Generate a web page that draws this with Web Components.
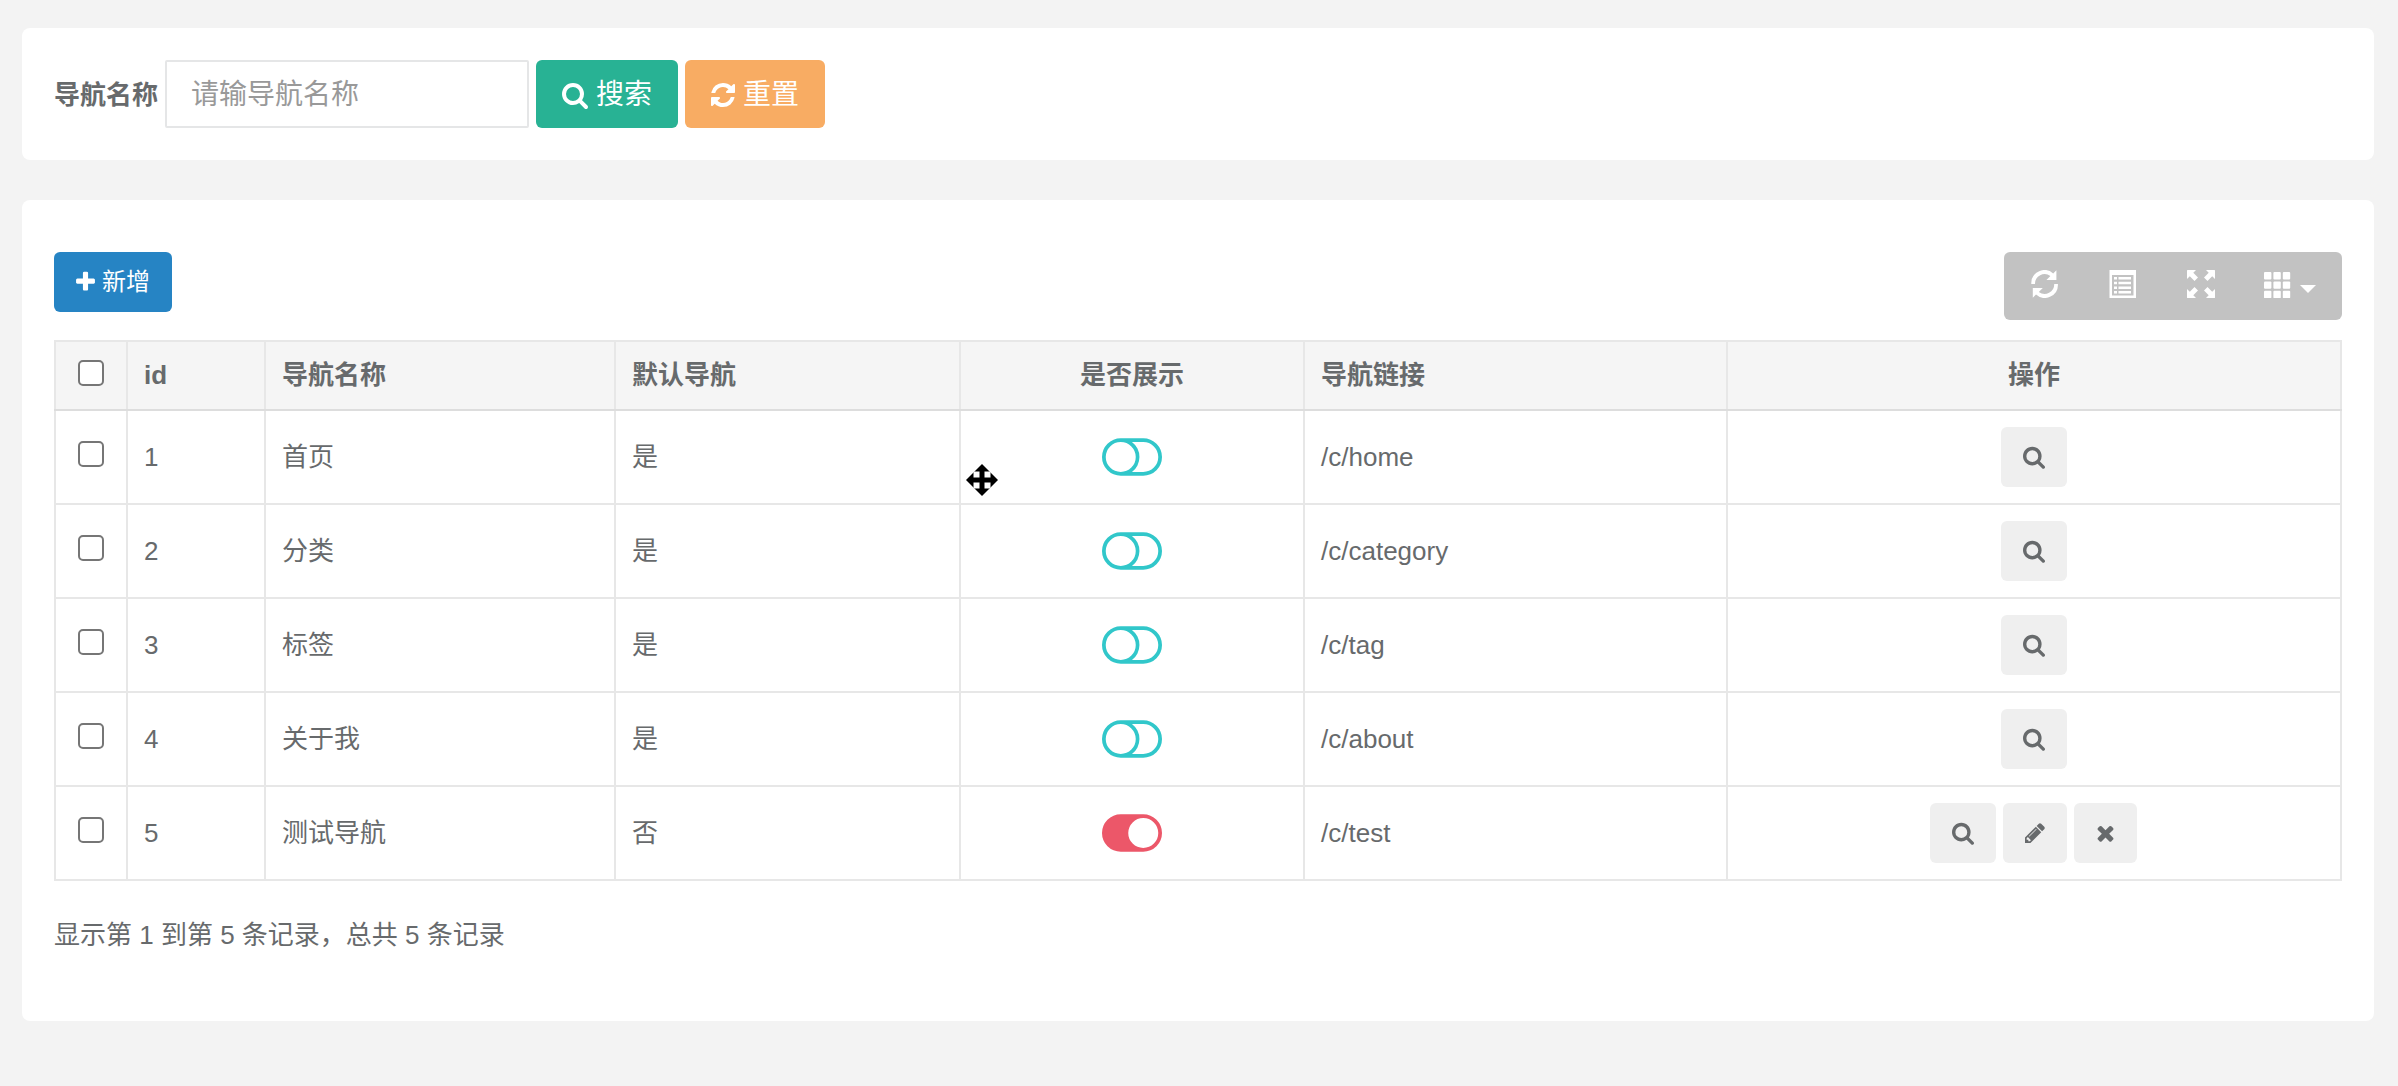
<!DOCTYPE html>
<html lang="zh-CN">
<head>
<meta charset="utf-8">
<title>导航管理</title>
<style>
  :root {
    --text: #676a6c;
    --line: #e7e7e7;
    --primary: #2684c4;
    --success: #28b294;
    --warning: #f8ac63;
    --info: #31c7ca;
    --danger: #ec5769;
  }
  html { background: #f3f3f3; }
  body {
    position: relative;
    margin: 0;
    color: var(--text);
    font: 26px/36px "Liberation Sans", "Noto Sans CJK SC", sans-serif;
  }
</style>
</head>
<body>
<nav-page></nav-page>

<script>
const ICONS = {
  search: [22, 26, '64 0 1664 1792', '<path d="M1216 832q0-185-131.5-316.5t-316.5-131.5-316.5 131.5-131.5 316.5 131.5 316.5 316.5 131.5 316.5-131.5 131.5-316.5zm512 832q0 52-38 90t-90 38q-54 0-90-38l-343-342q-179 124-399 124-143 0-273.5-55.5t-225-150-150-225-55.5-273.5 55.5-273.5 150-225 225-150 273.5-55.5 273.5 55.5 225 150 150 225 55.5 273.5q0 220-124 399l343 343q37 37 37 90z"/>'],
  refresh: [21, 24, '128 0 1536 1792', '<path d="M1639 1056q0 5-1 7-64 268-268 434.5t-478 166.5q-146 0-282.5-55t-243.5-157l-129 129q-19 19-45 19t-45-19-19-45v-448q0-26 19-45t45-19h448q26 0 45 19t19 45-19 45l-137 137q71 66 161 102t187 36q134 0 250-65t186-179q11-17 53-117 8-23 30-23h192q13 0 22.5 9.5t9.5 22.5zm25-800v448q0 26-19 45t-45 19h-448q-26 0-45-19t-19-45 19-45l138-138q-148-137-349-137-134 0-250 65t-186 179q-11 17-53 117-8 23-30 23h-199q-13 0-22.5-9.5t-9.5-22.5v-7q65-268 270-434.5t480-166.5q146 0 284 55.5t245 156.5l130-129q19-19 45-19t45 19 19 45z"/>'],
  plus: [19, 22, '192 0 1408 1792', '<path d="M1600 736v192q0 40-28 68t-68 28h-416v416q0 40-28 68t-68 28h-192q-40 0-68-28t-28-68v-416h-416q-40 0-68-28t-28-68v-192q0-40 28-68t68-28h416v-416q0-40 28-68t68-28h192q40 0 68 28t28 68v416h416q40 0 68 28t28 68z"/>'],
  pencil: [20, 24, '128 0 1536 1792', '<path d="M491 1536l91-91-235-235-91 91v107h128v128h107zm523-928q0-22-22-22-10 0-17 7l-542 542q-7 7-7 17 0 22 22 22 10 0 17-7l542-542q7-7 7-17zm-54-192l416 416-832 832h-416v-416zm683 96q0 53-37 90l-166 166-416-416 166-165q36-38 90-38 53 0 91 38l235 234q37 39 37 91z"/>'],
  remove: [19, 22, '192 0 1408 1792', '<path d="M1490 1322q0 40-28 68l-136 136q-28 28-68 28t-68-28l-294-294-294 294q-28 28-68 28t-68-28l-136-136q-28-28-28-68t28-68l294-294-294-294q-28-28-28-68t28-68l136-136q28-28 68-28t68 28l294 294 294-294q28-28 68-28t68 28l136 136q28 28 28 68t-28 68l-294 294 294 294q28 28 28 68z"/>']
};
const RELOAD = 'M.3 14A13.2 13.2 0 0 1 22.2 3.4L25.4.2V10H15.4L19.4 6A9.6 9.6 0 0 0 4 14Z';
const ARROW = 'M0 .6Q0 0 .6 0H9L6.3 2.8 11 7.5 7.5 11 2.8 6.3 0 9Z';
const GLYPHS = {
  reload: `<path d="${RELOAD}"/><path d="${RELOAD}" transform="rotate(180 13.6 14)"/>`,
  list: '<path fill-rule="evenodd" d="M.5 0H27V28H.5ZM3 5V25.600H24.500V5Z"/><path d="M5 7h3v2.500H5zM9.500 7h12.500v2.500H9.500zM5 11.700h3v2.500H5zM9.500 11.700h12.500v2.500H9.500zM5 16.400h3v2.500H5zM9.500 16.400h12.500v2.500H9.500zM5 21h3v2.500H5zM9.500 21h12.500v2.500H9.500z"/>',
  full: ['1 0 0 1 0 0', '-1 0 0 1 28 0', '1 0 0 -1 0 28', '-1 0 0 -1 28 28'].map(m => `<path d="${ARROW}" transform="matrix(${m})"/>`).join(''),
  grid: [0, 9.4, 18.8].map(y => [0, 9.4, 18.8].map(x => `<rect x="${x}" y="${y + 2}" width="7.400" height="7.400" rx="1"/>`).join('')).join('')
};

class BaseElement extends HTMLElement {
  render(css, html) {
    if (!this.shadowRoot) this.attachShadow({ mode: 'open' });
    this.shadowRoot.innerHTML = `<style>*{box-sizing:border-box}${css}</style>${html}`;
  }
}

class FaIcon extends BaseElement {
  connectedCallback() {
    const [small, large, box, shape] = ICONS[this.getAttribute('name')];
    const big = this.getAttribute('size') === 'lg';
    this.render(':host{display:block}svg{display:block;fill:currentColor}',
      `<svg width="${big ? large : small}" height="${big ? 28 : 24}" viewBox="${box}" aria-hidden="true">${shape}</svg>`);
  }
}

class UiButton extends BaseElement {
  connectedCallback() {
    const label = this.getAttribute('label');
    this.render(`
      :host { display: block; --bg: #efefef; --fg: var(--text); }
      :host([kind=primary]) { --bg: var(--primary); --fg: #fff; }
      :host([kind=success]) { --bg: var(--success); --fg: #fff; }
      :host([kind=warning]) { --bg: var(--warning); --fg: #fff; }
      button {
        display: flex; align-items: center; gap: 7px;
        height: 60px; margin: 0; padding: 0 22px; border: 0; border-radius: 6px;
        background: var(--bg); color: var(--fg); font: inherit; font-size: 24px; cursor: pointer;
      }
      :host([size=lg]) button { height: 68px; padding: 2px 26px 0; gap: 8px; font-size: 28px; }
    `, `<button type="button"${label ? ` aria-label="${label}"` : ''}><slot></slot></button>`);
  }
}

class UiPanel extends BaseElement {
  connectedCallback() {
    this.render(':host{display:block;background:#fff;border-radius:8px;padding:32px}', '<slot></slot>');
  }
}

class UiSwitch extends BaseElement {
  connectedCallback() {
    const on = this.hasAttribute('on');
    const shape = on
      ? 'M640 0H1408A640 640 0 0 1 1408 1280H640A640 640 0 0 1 640 0ZM1408 128A512 512 0 0 0 1408 1152A512 512 0 0 0 1408 128Z'
      : 'M640 0H1408A640 640 0 0 1 1408 1280H640A640 640 0 0 1 640 0ZM640 128A512 512 0 0 0 640 1152A512 512 0 0 0 640 128ZM1022 128A640 640 0 0 1 1022 1152H1408A512 512 0 0 0 1408 128Z';
    this.render(`
      :host { display: block; width: 60px; margin: 0 auto; color: var(--info); }
      :host([on]) { color: var(--danger); }
      label { display: grid; cursor: pointer; }
      label > * { grid-area: 1 / 1; }
      input { width: 60px; height: 38px; margin: 0; opacity: 0; }
      svg { display: block; fill: currentColor; }
    `, `<label><input type="checkbox" role="switch" aria-label="是否展示"${on ? ' checked' : ''}>
        <svg width="60" height="38" viewBox="0 0 2048 1280" aria-hidden="true"><path fill-rule="evenodd" d="${shape}"/></svg></label>`);
  }
}

class UiCheck extends BaseElement {
  connectedCallback() {
    this.render(`
      :host { display: block; }
      input {
        display: block; appearance: none; width: 26px; height: 26px; margin: 0 auto 6px;
        border: 2px solid #767676; border-radius: 5px; background: #fff;
      }
      input:checked { background: var(--primary); border-color: var(--primary); }
    `, `<input type="checkbox" aria-label="${this.getAttribute('label')}">`);
  }
}

class NavSearch extends BaseElement {
  connectedCallback() {
    this.render(`
      :host { display: block; }
      form { display: flex; align-items: center; gap: 7px; }
      label { padding-top: 2px; font-weight: 700; }
      input {
        width: 364px; height: 68px; padding: 2px 24px 0; border: 2px solid #e5e6e7; border-radius: 2px;
        background: #fff; color: inherit; font: inherit; font-size: 28px; outline: 0;
      }
      input::placeholder { color: #999; opacity: 1; }
    `, `<form>
        <label for="name">导航名称</label>
        <input id="name" type="text" placeholder="请输导航名称">
        <ui-button kind="success" size="lg"><fa-icon name="search" size="lg"></fa-icon>搜索</ui-button>
        <ui-button kind="warning" size="lg"><fa-icon name="refresh" size="lg"></fa-icon>重置</ui-button>
      </form>`);
  }
}

class NavToolbar extends BaseElement {
  connectedCallback() {
    const glyph = n => `<svg width="28" height="28" viewBox="0 0 28 28" aria-hidden="true">${GLYPHS[n]}</svg>`;
    this.render(`
      :host { display: flex; justify-content: space-between; align-items: flex-start; padding: 20px 0; }
      .tools { display: flex; border-radius: 6px; overflow: hidden; background: #c2c2c2; }
      .tools button {
        display: flex; align-items: flex-start; height: 68px; margin: 0; padding: 18px 23px 0 27px;
        border: 0; background: none; cursor: pointer;
      }
      .tools button.menu { padding: 18px 26px 0; gap: 8px; }
      svg { display: block; fill: #fff; }
    `, `<ui-button kind="primary"><fa-icon name="plus"></fa-icon>新增</ui-button>
      <div class="tools">
        <button type="button" aria-label="刷新">${glyph('reload')}</button>
        <button type="button" aria-label="切换">${glyph('list')}</button>
        <button type="button" aria-label="全屏">${glyph('full')}</button>
        <button type="button" class="menu" aria-label="列">${glyph('grid')}<svg width="16" height="28" viewBox="0 0 16 28" aria-hidden="true"><path d="M0 15H16L8 23Z"/></svg></button>
      </div>`);
  }
}

class NavTable extends BaseElement {
  connectedCallback() {
    const rows = [
      [1, '首页', '是', false, '/c/home'],
      [2, '分类', '是', false, '/c/category'],
      [3, '标签', '是', false, '/c/tag'],
      [4, '关于我', '是', false, '/c/about'],
      [5, '测试导航', '否', true, '/c/test']
    ];
    const act = (icon, label) => `<ui-button label="${label}"><fa-icon name="${icon}"></fa-icon></ui-button>`;
    const body = rows.map(([id, name, def, on, link]) => `<tr>
      <td><ui-check label="选择 ${id}"></ui-check></td>
      <td>${id}</td><td>${name}</td><td>${def}</td>
      <td><ui-switch${on ? ' on' : ''}></ui-switch></td>
      <td>${link}</td>
      <td><div class="actions">${act('search', '查看')}${on ? act('pencil', '编辑') + act('remove', '删除') : ''}</div></td>
    </tr>`).join('');
    const widths = [3.15, 6.04, 15.31, 15.09, 15.05, 18.5, 26.86];
    this.render(`
      :host { display: block; }
      table { width: 100%; border-collapse: collapse; table-layout: fixed; }
      th, td { padding: 16px; border: 2px solid var(--line); text-align: left; vertical-align: middle; }
      th { background: #f5f5f5; border-bottom-color: #ddd; line-height: 35px; }
      th.mid { text-align: center; }
      td { height: 94px; }
      .actions { display: flex; justify-content: center; gap: 7px; }
      p { margin: 36px 0; }
    `, `<table>
        <colgroup>${widths.map(w => `<col style="width:${w}%">`).join('')}</colgroup>
        <thead><tr><th><ui-check label="全选"></ui-check></th><th>id</th><th>导航名称</th><th>默认导航</th><th class="mid">是否展示</th><th>导航链接</th><th class="mid">操作</th></tr></thead>
        <tbody>${body}</tbody>
      </table>
      <p>显示第 1 到第 5 条记录，总共 5 条记录</p>`);
  }
}

class MovePointer extends BaseElement {
  connectedCallback() {
    this.render(':host{display:block;position:absolute;left:966px;top:464px;pointer-events:none}svg{display:block}',
      `<svg width="32" height="32" viewBox="0 0 32 32" aria-hidden="true"><path d="M16 0L32 16L16 32L0 16Z"/>
       <path fill="#fff" d="M7.500 7.500h6v6h-6zM18.500 7.500h6v6h-6zM7.500 18.500h6v6h-6zM18.500 18.500h6v6h-6z"/></svg>`);
  }
}

class NavPage extends BaseElement {
  connectedCallback() {
    this.render(`
      :host { display: block; padding: 28px 24px 28px 22px; }
      main { display: flex; flex-direction: column; gap: 40px; }
    `, `<main>
        <ui-panel><nav-search></nav-search></ui-panel>
        <ui-panel><nav-toolbar></nav-toolbar><nav-table></nav-table></ui-panel>
      </main>
      <move-pointer></move-pointer>`);
  }
}

customElements.define('fa-icon', FaIcon);
customElements.define('ui-button', UiButton);
customElements.define('ui-panel', UiPanel);
customElements.define('ui-switch', UiSwitch);
customElements.define('ui-check', UiCheck);
customElements.define('nav-search', NavSearch);
customElements.define('nav-toolbar', NavToolbar);
customElements.define('nav-table', NavTable);
customElements.define('move-pointer', MovePointer);
customElements.define('nav-page', NavPage);
</script>
</body>
</html>
